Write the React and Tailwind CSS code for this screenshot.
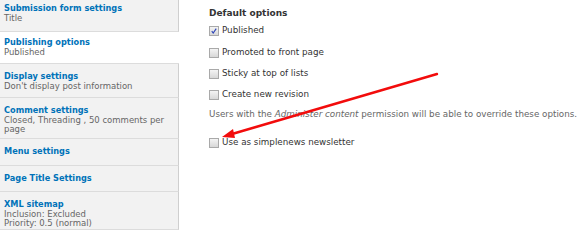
import React from 'react'

const tabs = [
  { title: 'Submission form settings', sub: ['Title'], h: 'h-[32px] pt-[3px]' },
  { title: 'Publishing options', sub: ['Published'], h: 'h-[32px] pt-[5px]', active: true },
  { title: 'Display settings', sub: ["Don't display post information"], h: 'h-[34px] pt-[7px]' },
  { title: 'Comment settings', sub: ['Closed, Threading , 50 comments per page'], h: 'h-[41px] pt-[7px]' },
  { title: 'Menu settings', sub: [], h: 'h-[27px] pt-[7px]' },
  { title: 'Page Title Settings', sub: [], h: 'h-[26px] pt-[7px]' },
  { title: 'XML sitemap', sub: ['Inclusion: Excluded', 'Priority: 0.5 (normal)'], h: 'flex-1 pt-[7px]' },
]

const Checkbox = ({ checked }) => (
  <span className="relative inline-block w-[10px] h-[10px] border border-[#a9a9a9] bg-gradient-to-b from-[#f4f4f4] to-[#d8d8d8] shrink-0">
    {checked && (
      <svg viewBox="0 0 10 10" className="absolute inset-0 w-full h-full">
        <path d="M2.2 5.2 L4 7.6 L7.8 2" fill="none" stroke="#2f46b8" strokeWidth="1.4" />
      </svg>
    )}
  </span>
)

const Option = ({ label, checked, className = '' }) => (
  <div className={`flex items-center gap-[3px] ${className}`}>
    <Checkbox checked={checked} />
    <span>{label}</span>
  </div>
)

export default function App() {
  return (
    <div className="relative flex w-[585px] h-[230px] bg-white overflow-hidden text-[8.75px] leading-[11px] text-[#333]" style={{ fontFamily: '"DejaVu Sans", Verdana, sans-serif' }}>
      {/* vertical tabs */}
      <div className="flex flex-col w-[179px] shrink-0">
        {tabs.map((t, i) => (
          <div
            key={i}
            className={`${t.h} px-[4px] border-b border-[#dcdcdc] ${t.active ? 'bg-white' : 'bg-[#f2f2f2] border-r border-r-[#cfcfcf]'}`}
          >
            <div className="font-bold text-[8.2px] text-[#0072b9]">{t.title}</div>
            {t.sub.map((s, j) => (
              <div key={j} className="text-[#666] text-[8.5px] leading-[9px] w-[166px]">{s}</div>
            ))}
          </div>
        ))}
      </div>

      {/* content */}
      <div className="flex-1 pl-[30px] pt-[8px] text-[#333]">
        <div className="font-bold text-[9px] mb-[6px]">Default options</div>
        <Option label="Published" checked className="mb-[11px]" />
        <Option label="Promoted to front page" className="mb-[10px]" />
        <Option label="Sticky at top of lists" className="mb-[10px]" />
        <Option label="Create new revision" className="mb-[9px]" />
        <div className="text-[#666]">
          Users with the <em>Administer content</em> permission will be able to override these options.
        </div>
        <Option label="Use as simplenews newsletter" className="mt-[17px]" />
      </div>

      {/* annotation arrow */}
      <svg className="absolute inset-0 pointer-events-none" width="585" height="230" viewBox="0 0 585 230">
        <line x1="437" y1="74" x2="232" y2="134" stroke="#f20c0c" strokeWidth="2.4" strokeLinecap="round" />
        <polygon points="222,137 233,129 235,138" fill="#f20c0c" />
      </svg>
    </div>
  )
}
